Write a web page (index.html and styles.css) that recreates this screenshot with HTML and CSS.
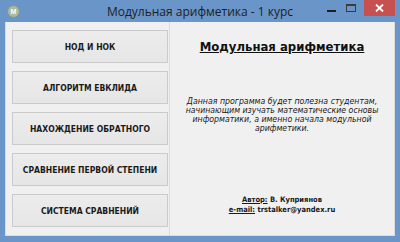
FILE: index.html
```html
<!DOCTYPE html>
<html lang="ru">
<head>
    <meta charset="UTF-8">
    <title>Модульная арифметика - 1 курс</title>
    <link rel="stylesheet" href="styles.css">
</head>
<body>
    <div class="window">
        <div class="titlebar">
            <div class="app-icon">M</div>
            <div class="caption">Модульная арифметика - 1 курс</div>
            <div class="sys-buttons">
                <span class="sys min"></span>
                <span class="sys max"></span>
                <span class="sys close">
                    <svg width="9" height="8" viewBox="0 0 9 8"><path d="M1 0.5 L8 7.5 M8 0.5 L1 7.5" stroke="#fff" stroke-width="1.8"/></svg>
                </span>
            </div>
        </div>
        <div class="client">
            <div class="menu-panel">
                <button class="menu-btn">НОД И НОК</button>
                <button class="menu-btn">АЛГОРИТМ ЕВКЛИДА</button>
                <button class="menu-btn">НАХОЖДЕНИЕ ОБРАТНОГО</button>
                <button class="menu-btn">СРАВНЕНИЕ ПЕРВОЙ СТЕПЕНИ</button>
                <button class="menu-btn">СИСТЕМА СРАВНЕНИЙ</button>
            </div>
            <div class="info-panel">
                <h1 class="info-title">Модульная арифметика</h1>
                <p class="info-text">
                    Данная программа будет полезна студентам,<br>
                    начинающим изучать математические основы<br>
                    информатики, а именно начала модульной<br>
                    арифметики.
                </p>
                <div class="author">
                    <div><u>Автор:</u> В. Куприянов</div>
                    <div><u>e-mail:</u> trstalker@yandex.ru</div>
                </div>
            </div>
        </div>
    </div>
</body>
</html>
```

FILE: styles.css
```css
body {
    margin: 0;
    width: 400px;
    height: 242px;
    overflow: hidden;
    font-family: "DejaVu Sans Condensed", "DejaVu Sans", sans-serif;
}
.window {
    width: 400px;
    height: 242px;
    background: #6a95c9;
    display: flex;
    flex-direction: column;
    box-sizing: border-box;
}
.titlebar {
    height: 22px;
    display: flex;
    align-items: flex-start;
    position: relative;
}
.app-icon {
    width: 11px;
    height: 11px;
    margin: 5px 0 0 7px;
    border-radius: 50%;
    background: #a8b9a6;
    border: 1px solid #7f9a80;
    color: #fff;
    font-size: 7px;
    font-weight: bold;
    line-height: 11px;
    text-align: center;
    font-family: "Liberation Sans", sans-serif;
}
.caption {
    position: absolute;
    left: 0;
    right: 0;
    top: 3px;
    text-align: center;
    font-family: "Open Sans", "Liberation Sans", sans-serif;
    font-size: 12px;
    color: #1e1e1e;
}
.sys-buttons {
    margin-left: auto;
    margin-right: 5px;
    display: flex;
    align-items: flex-start;
    z-index: 1;
}
.sys {
    display: block;
    height: 15px;
}
.sys.min {
    width: 10px;
    margin-right: 9px;
    position: relative;
}
.sys.min::after {
    content: "";
    position: absolute;
    left: 0;
    top: 10px;
    width: 9px;
    height: 2px;
    background: #1e1e1e;
}
.sys.max {
    width: 10px;
    margin-right: 8px;
    position: relative;
}
.sys.max::after {
    content: "";
    position: absolute;
    left: 0;
    top: 4px;
    width: 8px;
    height: 5px;
    border: 1px solid #3a3a3a;
    border-top-width: 2px;
}
.sys.close {
    width: 31px;
    height: 16px;
    background: #c75050;
    display: flex;
    align-items: center;
    justify-content: center;
}
.client {
    flex: 1;
    margin: 0 5px 6px 5px;
    background: #f0f0f0;
    display: flex;
    border: 1px solid #dcdcdc;
    border-top: none;
}
.menu-panel {
    width: 164px;
    box-sizing: border-box;
    border-right: 1px solid #dadada;
    padding: 8px 0 0 6px;
    display: flex;
    flex-direction: column;
    gap: 8px;
}
.menu-btn {
    width: 156px;
    height: 33px;
    background: linear-gradient(#ececec, #e6e6e6);
    border: 1px solid #cacaca;
    border-radius: 0;
    font-family: "DejaVu Sans Condensed", "DejaVu Sans", sans-serif;
    font-size: 8.5px;
    font-weight: bold;
    color: #1a1a1a;
    padding: 0;
}
.info-panel {
    flex: 1;
    display: flex;
    flex-direction: column;
    align-items: center;
    text-align: center;
    color: #1a1a1a;
}
.info-title {
    margin: 17px 0 0 0;
    font-size: 13px;
    font-weight: bold;
    text-decoration: underline;
    color: #111;
}
.info-text {
    margin: 43px 0 0 0;
    font-size: 8.7px;
    font-style: italic;
    line-height: 9px;
}
.author {
    margin-top: 62px;
    font-size: 7.5px;
    font-weight: bold;
    line-height: 10px;
}
```
